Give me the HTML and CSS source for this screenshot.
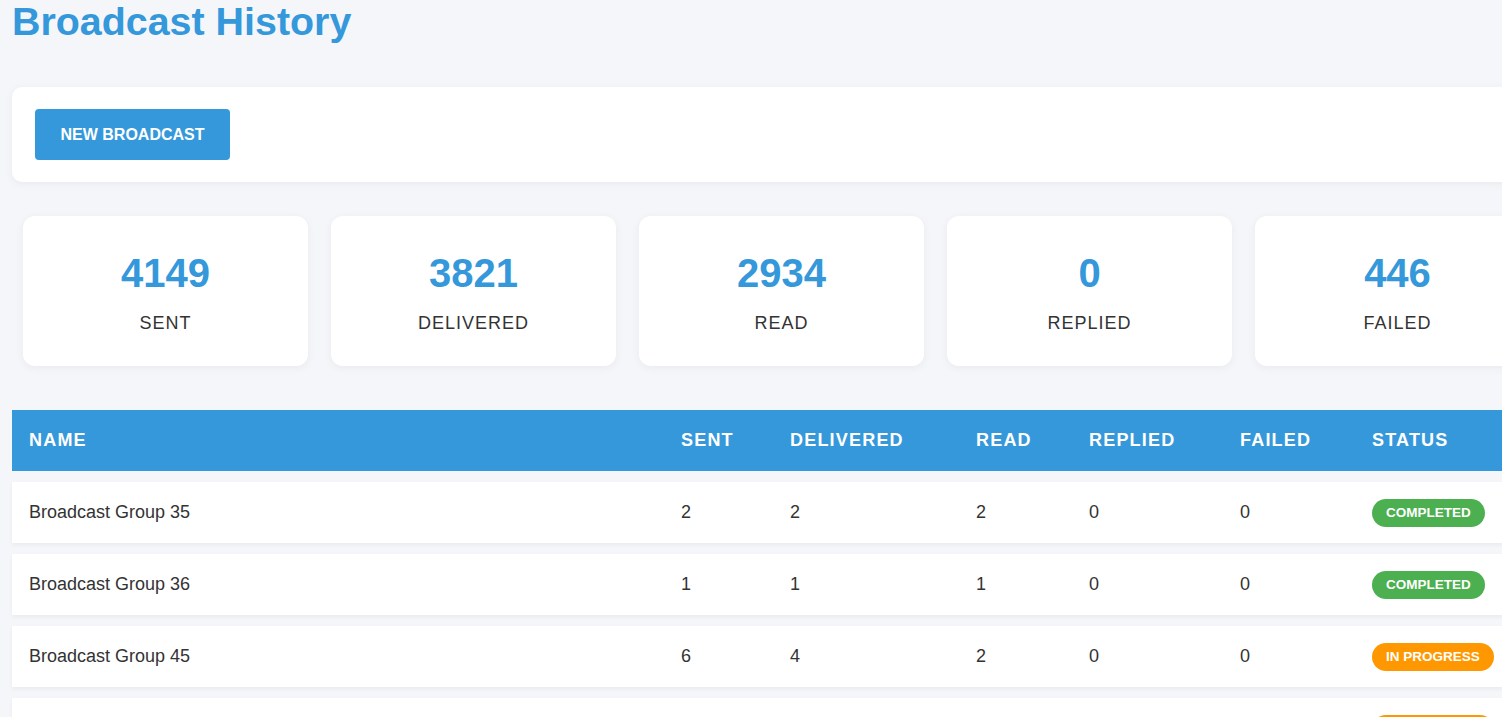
FILE: index.html
```html
<!DOCTYPE html>
<html lang="en">
<head>
<meta charset="utf-8">
<title>Broadcast History</title>
<link rel="stylesheet" href="styles.css">
</head>
<body>
<div class="page">
  <h1 class="title">Broadcast History</h1>

  <div class="toolbar">
    <button class="btn-primary" type="button">New Broadcast</button>
  </div>

  <div class="stats">
    <div class="stat-card"><div class="stat-value">4149</div><div class="stat-label">Sent</div></div>
    <div class="stat-card"><div class="stat-value">3821</div><div class="stat-label">Delivered</div></div>
    <div class="stat-card"><div class="stat-value">2934</div><div class="stat-label">Read</div></div>
    <div class="stat-card"><div class="stat-value">0</div><div class="stat-label">Replied</div></div>
    <div class="stat-card"><div class="stat-value">446</div><div class="stat-label">Failed</div></div>
  </div>

  <table class="history">
    <colgroup>
      <col class="c-name"><col class="c-sent"><col class="c-del"><col class="c-read"><col class="c-rep"><col class="c-fail"><col class="c-status">
    </colgroup>
    <thead>
      <tr><th>Name</th><th>Sent</th><th>Delivered</th><th>Read</th><th>Replied</th><th>Failed</th><th>Status</th></tr>
    </thead>
    <tbody>
      <tr><td>Broadcast Group 35</td><td>2</td><td>2</td><td>2</td><td>0</td><td>0</td><td><span class="badge badge-done">Completed</span></td></tr>
      <tr><td>Broadcast Group 36</td><td>1</td><td>1</td><td>1</td><td>0</td><td>0</td><td><span class="badge badge-done">Completed</span></td></tr>
      <tr><td>Broadcast Group 45</td><td>6</td><td>4</td><td>2</td><td>0</td><td>0</td><td><span class="badge badge-progress">In Progress</span></td></tr>
      <tr><td>Broadcast Group 46</td><td>5</td><td>3</td><td>2</td><td>0</td><td>1</td><td><span class="badge badge-progress">In Progress</span></td></tr>
    </tbody>
  </table>
</div>
</body>
</html>
```
FILE: styles.css
```css
html { overflow: hidden; }
body {
  margin: 0;
  background: #f4f6fa;
  font-family: "Liberation Sans", Arial, sans-serif;
  color: #333;
}
.page {
  width: 1539px;
  padding: 0 12px 40px;
}
.title {
  margin: 1px 0 0;
  font-size: 39.4px;
  line-height: 40px;
  font-weight: bold;
  color: #3498db;
}
.toolbar {
  margin-top: 46px;
  background: #fff;
  border-radius: 10px;
  box-shadow: 0 2px 10px rgba(0, 0, 0, 0.05);
  padding: 22px 23px;
  display: flex;
}
.btn-primary {
  background: #3498db;
  color: #fff;
  border: 0;
  border-radius: 4px;
  height: 51px;
  width: 195px;
  padding: 0;
  font-family: "Liberation Sans", Arial, sans-serif;
  font-size: 16px;
  font-weight: bold;
  text-transform: uppercase;
  cursor: pointer;
}
.stats {
  margin-top: 34px;
  padding: 0 11px;
  display: grid;
  grid-template-columns: repeat(5, 285px);
  column-gap: 23px;
}
.stat-card {
  height: 150px;
  background: #fff;
  border-radius: 12px;
  box-shadow: 0 2px 10px rgba(0, 0, 0, 0.05);
  display: flex;
  flex-direction: column;
  align-items: center;
  justify-content: center;
}
.stat-value {
  font-size: 40px;
  font-weight: bold;
  color: #3498db;
  line-height: 46px;
  margin-top: 2px;
}
.stat-label {
  margin-top: 17px;
  font-size: 18px;
  letter-spacing: 1px;
  text-transform: uppercase;
  color: #333;
}
.history {
  margin-top: 33px;
  width: 100%;
  table-layout: fixed;
  border-collapse: separate;
  border-spacing: 0 11px;
  font-size: 18px;
}
.c-name { width: 652px; }
.c-sent { width: 109px; }
.c-del { width: 186px; }
.c-read { width: 113px; }
.c-rep { width: 151px; }
.c-fail { width: 132px; }
.history th {
  background: #3498db;
  color: #fff;
  text-align: left;
  font-weight: bold;
  text-transform: uppercase;
  letter-spacing: 1.2px;
  height: 61px;
  padding: 0 17px;
  box-sizing: border-box;
  vertical-align: middle;
}
.history tbody tr {
  background: #fff;
  box-shadow: 0 2px 4px rgba(0, 0, 0, 0.05);
}
.history td {
  height: 61px;
  padding: 0 17px;
  box-sizing: border-box;
  vertical-align: middle;
  color: #333;
}
.badge {
  display: inline-block;
  padding: 6px 14px;
  border-radius: 14px;
  font-size: 13.5px;
  line-height: 16px;
  font-weight: bold;
  color: #fff;
  text-transform: uppercase;
  white-space: nowrap;
}
.badge-done { background: #4caf50; }
.badge-progress { background: #ff9800; }
```
